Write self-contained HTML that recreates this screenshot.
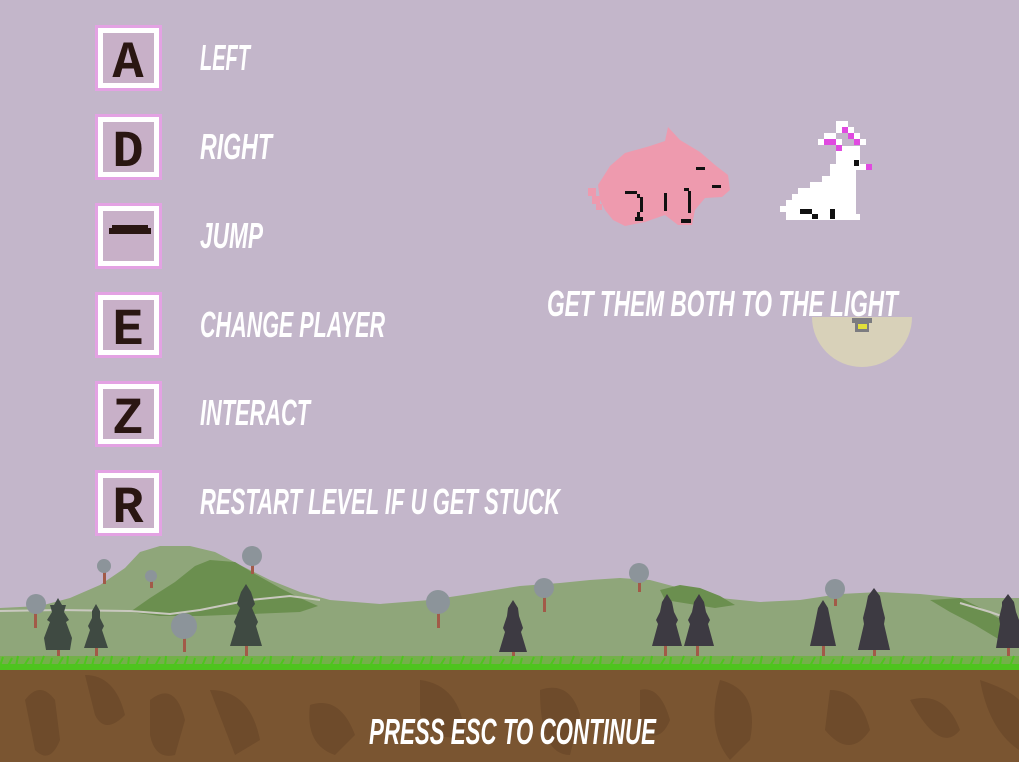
<!DOCTYPE html>
<html><head><meta charset="utf-8"><style>
html,body{margin:0;padding:0;background:#c3b6ca;width:1019px;height:762px;overflow:hidden}
svg{display:block}
.t{font-family:"Liberation Sans Narrow","Liberation Sans",sans-serif;font-weight:bold;font-style:italic;fill:#fff}
.k{font-family:"Liberation Mono",monospace;font-size:52px;font-weight:bold;fill:#2a1612}
</style></head><body>
<svg width="1019" height="762" viewBox="0 0 1019 762" xmlns="http://www.w3.org/2000/svg">
<rect width="1019" height="762" fill="#c3b6ca"/>
<polygon fill="#8fa67a" points="0,608 40,606 70,598 100,585 125,568 140,552 160,546 190,546 215,552 240,565 270,580 300,592 330,600 380,604 430,600 470,594 520,586 560,583 590,580 620,578 650,580 680,588 720,598 760,602 800,600 840,594 880,592 920,594 960,598 1019,598 1019,670 0,670"/>
<polygon fill="#6b8f4f" points="130,612 150,598 175,582 195,566 210,560 235,562 255,574 280,588 300,598 318,606 300,612 250,614 200,616 160,616"/>
<polygon fill="#6b8f4f" points="660,590 680,585 700,588 720,596 735,605 715,608 690,604 665,600"/>
<polygon fill="#6b8f4f" points="930,600 960,598 985,610 1005,622 1019,630 1019,648 1000,640 975,625 950,612"/>
<polyline fill="none" stroke="#c9c8bf" stroke-width="2" points="0,611 60,610 130,611 170,614 200,610 250,600 290,596 320,600"/>
<polyline fill="none" stroke="#c9c8bf" stroke-width="2" points="960,603 990,612 1019,622"/>
<g fill="#a25a48">
<rect x="34" y="610" width="3" height="18"/><rect x="103" y="572" width="3" height="12"/><rect x="150" y="580" width="3" height="8"/>
<rect x="183" y="630" width="3" height="22"/><rect x="251" y="562" width="3" height="12"/><rect x="437" y="606" width="3" height="22"/>
<rect x="543" y="592" width="3" height="20"/><rect x="638" y="578" width="3" height="14"/><rect x="834" y="592" width="3" height="14"/>
</g>
<g fill="#8c949a">
<circle cx="36" cy="604" r="10"/><circle cx="104" cy="566" r="7"/><circle cx="151" cy="576" r="6"/>
<circle cx="184" cy="626" r="13"/><circle cx="252" cy="556" r="10"/><circle cx="438" cy="602" r="12"/>
<circle cx="544" cy="588" r="10"/><circle cx="639" cy="573" r="10"/><circle cx="835" cy="589" r="10"/>
</g>
<g fill="#a25a48">
<rect x="57" y="640" width="3" height="22"/><rect x="95" y="640" width="3" height="22"/><rect x="245" y="640" width="3" height="22"/>
<rect x="512" y="640" width="3" height="26"/><rect x="664" y="640" width="3" height="20"/><rect x="696" y="640" width="3" height="20"/>
<rect x="822" y="640" width="3" height="24"/><rect x="873" y="640" width="3" height="18"/><rect x="1007" y="640" width="3" height="16"/>
</g>
<g fill="#3f4a42">
<polygon points="58,598 62,605 66,605 64,612 69,620 66,622 72,638 70,650 46,650 44,638 50,622 47,620 52,612 50,605 54,605"/>
<polygon points="96,604 100,611 100,618 104,626 102,630 108,648 84,648 90,630 88,626 92,618 92,611"/>
<polygon points="246,584 251,592 255,604 252,608 258,622 256,626 262,646 230,646 236,626 234,622 240,608 237,604 241,592"/>
</g>
<g fill="#3d3a42">
<polygon points="513,600 518,608 519,616 523,628 521,632 527,652 499,652 505,632 503,628 507,616 508,608"/>
<polygon points="667,594 672,602 674,612 678,620 676,624 682,646 652,646 658,624 656,620 660,612 662,602"/>
<polygon points="699,594 704,602 706,612 710,620 708,624 714,646 684,646 690,624 688,620 692,612 694,602"/>
<polygon points="823,600 828,608 830,618 832,628 836,646 810,646 814,628 816,618 818,608"/>
<polygon points="874,588 880,596 882,606 885,618 884,624 890,650 858,650 864,624 863,618 866,606 868,596"/>
<polygon points="1008,594 1014,602 1016,612 1019,620 1019,648 996,648 1000,624 999,618 1002,606 1002,602"/>
</g>
<rect x="0" y="656" width="1019" height="15" fill="#74b04a"/>
<rect x="0" y="664" width="1019" height="7" fill="#4ec41e"/>
<path fill="none" stroke="#4ec41e" stroke-width="2" d="M0,666 l3,-9 M8,666 l4,-8 M16,666 l2,-10 M24,666 l5,-8 M33,666 l1,-9 M40,666 l4,-10 M50,666 l2,-8 M58,666 l5,-9 M67,666 l1,-10 M75,666 l4,-7 M84,666 l3,-10 M92,666 l2,-8 M100,666 l4,-9 M110,666 l2,-10 M118,666 l5,-8 M128,666 l1,-9 M136,666 l4,-10 M146,666 l2,-8 M155,666 l5,-9 M165,666 l1,-10 M174,666 l4,-7 M184,666 l3,-10 M193,666 l2,-8 M202,666 l4,-9 M212,666 l2,-10 M221,666 l5,-8 M231,666 l1,-9 M240,666 l4,-10 M250,666 l2,-8 M260,666 l5,-9 M270,666 l1,-10 M280,666 l4,-7 M290,666 l3,-10 M300,666 l2,-8 M310,666 l4,-9 M320,666 l2,-10 M330,666 l5,-8 M340,666 l1,-9 M350,666 l4,-10 M360,666 l2,-8 M370,666 l5,-9 M380,666 l1,-10 M390,666 l4,-7 M400,666 l3,-10 M410,666 l2,-8 M420,666 l4,-9 M430,666 l2,-10 M440,666 l5,-8 M450,666 l1,-9 M460,666 l4,-10 M470,666 l2,-8 M480,666 l5,-9 M490,666 l1,-10 M500,666 l4,-7 M510,666 l3,-10 M520,666 l2,-8 M530,666 l4,-9 M540,666 l2,-10 M550,666 l5,-8 M560,666 l1,-9 M570,666 l4,-10 M580,666 l2,-8 M590,666 l5,-9 M600,666 l1,-10 M610,666 l4,-7 M620,666 l3,-10 M630,666 l2,-8 M640,666 l4,-9 M650,666 l2,-10 M660,666 l5,-8 M670,666 l1,-9 M680,666 l4,-10 M690,666 l2,-8 M700,666 l5,-9 M710,666 l1,-10 M720,666 l4,-7 M730,666 l3,-10 M740,666 l2,-8 M750,666 l4,-9 M760,666 l2,-10 M770,666 l5,-8 M780,666 l1,-9 M790,666 l4,-10 M800,666 l2,-8 M810,666 l5,-9 M820,666 l1,-10 M830,666 l4,-7 M840,666 l3,-10 M850,666 l2,-8 M860,666 l4,-9 M870,666 l2,-10 M880,666 l5,-8 M890,666 l1,-9 M900,666 l4,-10 M910,666 l2,-8 M920,666 l5,-9 M930,666 l1,-10 M940,666 l4,-7 M950,666 l3,-10 M960,666 l2,-8 M970,666 l4,-9 M980,666 l2,-10 M990,666 l5,-8 M1000,666 l1,-9 M1010,666 l4,-10"/>
<rect x="0" y="670" width="1019" height="92" fill="#7a5531"/>
<g fill="#6e4b2b">
<path d="M25,700 q15,-20 30,0 l5,40 q-10,25 -25,10 z"/>
<path d="M85,675 q30,0 40,40 q-20,20 -30,0 z"/>
<path d="M150,700 q25,-20 35,20 l-10,35 q-20,5 -25,-20 z"/>
<path d="M210,690 q40,0 50,50 l-25,15 z"/>
<path d="M310,705 q30,-10 45,30 l-20,20 q-30,-10 -25,-50 z"/>
<path d="M420,680 q40,5 45,55 q-30,10 -45,-20 z"/>
<path d="M540,690 q30,-10 40,25 l-10,40 q-30,0 -30,-65 z"/>
<path d="M640,690 q20,-5 30,30 q-10,25 -30,10 z"/>
<path d="M720,680 q40,10 30,60 l-20,20 q-25,-30 -10,-80 z"/>
<path d="M830,690 q30,0 40,40 q-20,30 -45,0 z"/>
<path d="M910,700 q35,-10 50,30 q-20,25 -50,-30 z"/>
<path d="M980,680 q30,10 39,20 l0,50 q-30,-20 -39,-70 z"/>
</g>
<g>
<g transform="translate(95,25)"><rect x="1.5" y="1.5" width="64" height="63" fill="#c8b0c8" stroke="#e3a2e3" stroke-width="3"/><rect x="5.5" y="5.5" width="56" height="55" fill="none" stroke="#fff" stroke-width="5"/></g>
<g transform="translate(95,114)"><rect x="1.5" y="1.5" width="64" height="63" fill="#c8b0c8" stroke="#e3a2e3" stroke-width="3"/><rect x="5.5" y="5.5" width="56" height="55" fill="none" stroke="#fff" stroke-width="5"/></g>
<g transform="translate(95,203)"><rect x="1.5" y="1.5" width="64" height="63" fill="#c8b0c8" stroke="#e3a2e3" stroke-width="3"/><rect x="5.5" y="5.5" width="56" height="55" fill="none" stroke="#fff" stroke-width="5"/></g>
<g transform="translate(95,292)"><rect x="1.5" y="1.5" width="64" height="63" fill="#c8b0c8" stroke="#e3a2e3" stroke-width="3"/><rect x="5.5" y="5.5" width="56" height="55" fill="none" stroke="#fff" stroke-width="5"/></g>
<g transform="translate(95,381)"><rect x="1.5" y="1.5" width="64" height="63" fill="#c8b0c8" stroke="#e3a2e3" stroke-width="3"/><rect x="5.5" y="5.5" width="56" height="55" fill="none" stroke="#fff" stroke-width="5"/></g>
<g transform="translate(95,470)"><rect x="1.5" y="1.5" width="64" height="63" fill="#c8b0c8" stroke="#e3a2e3" stroke-width="3"/><rect x="5.5" y="5.5" width="56" height="55" fill="none" stroke="#fff" stroke-width="5"/></g>
</g>
<text class="k" x="128" y="77" text-anchor="middle">A</text>
<text class="k" x="128" y="166" text-anchor="middle">D</text>
<rect x="112" y="225" width="36" height="3" fill="#2a1612"/>
<rect x="109" y="228" width="42" height="6" fill="#2a1612"/>
<text class="k" x="128" y="344" text-anchor="middle">E</text>
<text class="k" x="128" y="433" text-anchor="middle">Z</text>
<text class="k" x="128" y="522" text-anchor="middle">R</text>
<text class="t" x="200" y="70" font-size="36" textLength="50" lengthAdjust="spacingAndGlyphs">LEFT</text>
<text class="t" x="200" y="159" font-size="36" textLength="72" lengthAdjust="spacingAndGlyphs">RIGHT</text>
<text class="t" x="200" y="248" font-size="36" textLength="63" lengthAdjust="spacingAndGlyphs">JUMP</text>
<text class="t" x="200" y="337" font-size="36" textLength="185" lengthAdjust="spacingAndGlyphs">CHANGE PLAYER</text>
<text class="t" x="200" y="425" font-size="36" textLength="110" lengthAdjust="spacingAndGlyphs">INTERACT</text>
<text class="t" x="200" y="514" font-size="36" textLength="360" lengthAdjust="spacingAndGlyphs">RESTART LEVEL IF U GET STUCK</text>
<path d="M812,317 L912,317 A50,50 0 0 1 812,317 Z" fill="#d8d1b9"/>
<rect x="852" y="318" width="20" height="5" fill="#7c7c80"/><rect x="855" y="323" width="14" height="9" fill="#7c7c80"/><rect x="858" y="324" width="9" height="5" fill="#e2e03a"/>
<text class="t" x="547" y="316" font-size="36" textLength="351" lengthAdjust="spacingAndGlyphs">GET THEM BOTH TO THE LIGHT</text>
<polygon fill="#ee9aae" points="598,185 610,166 625,153 650,146 665,141 668,127 680,140 700,152 715,165 728,175 730,190 722,197 705,198 695,210 692,225 678,225 665,215 645,222 625,226 613,220 605,210 600,200"/>
<g fill="#ee9aae"><rect x="588" y="188" width="8" height="8"/><rect x="592" y="196" width="8" height="8"/><rect x="596" y="204" width="6" height="6"/></g>
<g fill="#111">
<rect x="696" y="167" width="9" height="3"/><rect x="712" y="185" width="9" height="3"/>
<rect x="625" y="191" width="12" height="3"/><rect x="637" y="194" width="3" height="4"/><rect x="640" y="197" width="3" height="15"/><rect x="637" y="212" width="3" height="5"/><rect x="635" y="217" width="8" height="4"/>
<rect x="664" y="193" width="3" height="18"/>
<rect x="684" y="188" width="5" height="3"/><rect x="688" y="191" width="3" height="22"/><rect x="681" y="219" width="10" height="4"/>
</g>
<polygon fill="#fff" points="786,220 786,212 780,212 780,206 786,206 786,200 792,200 792,194 798,194 798,188 810,188 810,182 822,182 822,176 830,176 830,164 836,164 836,150 842,150 842,146 860,146 860,164 866,164 866,170 856,170 856,206 856,214 860,214 860,220"/>
<rect x="836" y="121" width="12" height="6" fill="#fff"/>
<rect x="836" y="127" width="6" height="6" fill="#fff"/><rect x="842" y="127" width="6" height="6" fill="#e04ae0"/><rect x="848" y="127" width="6" height="6" fill="#fff"/>
<rect x="824" y="133" width="12" height="6" fill="#fff"/><rect x="848" y="133" width="6" height="6" fill="#e04ae0"/><rect x="854" y="133" width="6" height="6" fill="#fff"/>
<rect x="818" y="139" width="6" height="6" fill="#fff"/><rect x="824" y="139" width="12" height="6" fill="#e04ae0"/><rect x="836" y="139" width="6" height="6" fill="#fff"/><rect x="854" y="139" width="6" height="6" fill="#e04ae0"/><rect x="860" y="139" width="6" height="6" fill="#fff"/>
<rect x="836" y="145" width="6" height="6" fill="#e04ae0"/>
<rect x="854" y="160" width="5" height="6" fill="#111"/><rect x="866" y="164" width="6" height="6" fill="#e04ae0"/>
<rect x="800" y="209" width="12" height="5" fill="#111"/><rect x="812" y="214" width="6" height="5" fill="#111"/><rect x="830" y="209" width="5" height="10" fill="#111"/>
<text class="t" x="369" y="744" font-size="36" textLength="287" lengthAdjust="spacingAndGlyphs">PRESS ESC TO CONTINUE</text>
</svg>
</body></html>
